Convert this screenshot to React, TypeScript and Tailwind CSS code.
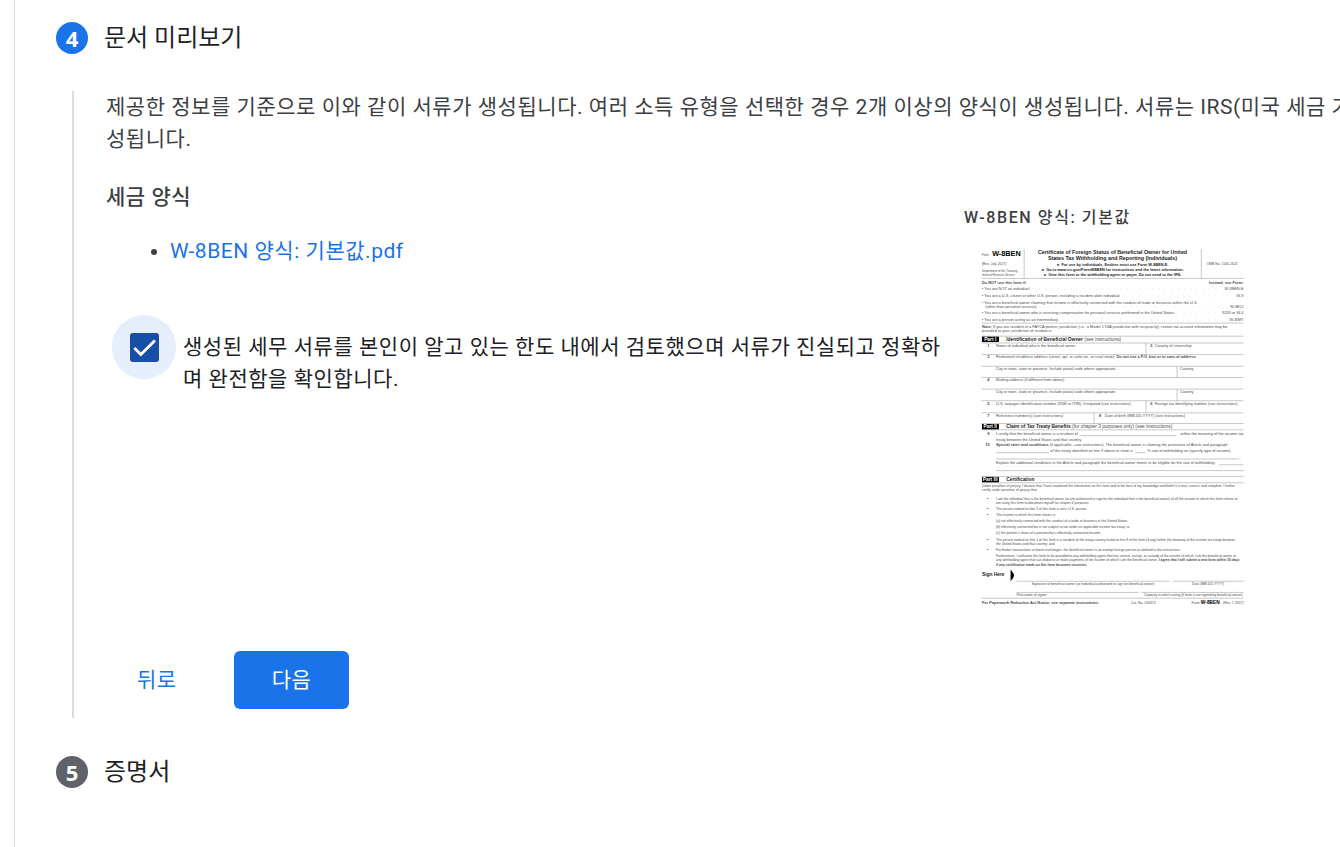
import React, { useState } from "react";

interface StepHeaderProps {
  number: number;
  title: string;
  active?: boolean;
}

const StepHeader: React.FC<StepHeaderProps> = ({ number, title, active = false }) => (
  <div className="flex items-center gap-4 tracking-normal">
    <span
      className={`flex size-8 shrink-0 items-center justify-center rounded-full font-['Noto_Sans',sans-serif] text-[22px] font-bold text-white ${
        active ? "bg-[#1a73e8]" : "bg-[#5f6368]"
      }`}
    >
      {number}
    </span>
    <h2 className="text-2xl leading-8 text-[#202124]">{title}</h2>
  </div>
);

// Full-width rules of the form, in PDF points
const RULES = [79, 171, 198, 212, 236, 260, 283, 307, 331, 356, 378, 391, 487, 500, 738];

// [x1, x2, y]
const FILL_LINES = [
  [238, 438, 403],
  [66, 176, 438],
  [353, 374, 438],
  [66, 567, 451],
  [525, 576, 463],
  [66, 576, 475],
  [108, 424, 703],
  [431, 576, 703],
  [108, 360, 726],
  [366, 576, 726],
];

// [x, y1, y2]
const DIVIDERS = [
  [124, 19, 79],
  [489, 19, 79],
  [375, 212, 236],
  [439, 260, 283],
  [439, 307, 331],
  [375, 331, 356],
  [268, 356, 378],
];

// [x1, y, x2]
const LEADERS = [
  [142, 101, 525],
  [335, 115, 545],
  [160, 137, 535],
  [440, 151, 520],
  [205, 165, 530],
];

const PARTS = [
  { y: 199, label: "Part I", title: "Identification of Beneficial Owner", note: "(see instructions)" },
  {
    y: 379,
    label: "Part II",
    title: "Claim of Tax Treaty Benefits",
    note: "(for chapter 3 purposes only) (see instructions)",
  },
  { y: 488, label: "Part III", title: "Certification", note: "" },
];

const FORM_TEXT: { x: number; y: number; text: string }[] = [
  { x: 37, y: 103, text: "• You are NOT an individual" },
  { x: 37, y: 117, text: "• You are a U.S. citizen or other U.S. person, including a resident alien individual" },
  {
    x: 37,
    y: 131,
    text: "• You are a beneficial owner claiming that income is effectively connected with the conduct of trade or business within the U.S.",
  },
  { x: 44, y: 139, text: "(other than personal services)" },
  {
    x: 37,
    y: 153,
    text: "• You are a beneficial owner who is receiving compensation for personal services performed in the United States",
  },
  { x: 37, y: 167, text: "• You are a person acting as an intermediary" },
  { x: 37, y: 190, text: "provided to your jurisdiction of residence." },
  { x: 66, y: 220, text: "Name of individual who is the beneficial owner" },
  { x: 393, y: 220, text: "Country of citizenship" },
  { x: 66, y: 268, text: "City or town, state or province. Include postal code where appropriate." },
  { x: 445, y: 268, text: "Country" },
  { x: 66, y: 291, text: "Mailing address (if different from above)" },
  { x: 66, y: 315, text: "City or town, state or province. Include postal code where appropriate." },
  { x: 445, y: 315, text: "Country" },
  { x: 66, y: 339, text: "U.S. taxpayer identification number (SSN or ITIN), if required (see instructions)" },
  { x: 393, y: 339, text: "Foreign tax identifying number (see instructions)" },
  { x: 66, y: 365, text: "Reference number(s) (see instructions)" },
  { x: 290, y: 365, text: "Date of birth (MM-DD-YYYY) (see instructions)" },
  { x: 66, y: 401, text: "I certify that the beneficial owner is a resident of" },
  { x: 66, y: 413, text: "treaty between the United States and that country." },
  { x: 178, y: 436, text: "of the treaty identified on line 9 above to claim a" },
  { x: 377, y: 436, text: "% rate of withholding on (specify type of income):" },
  { x: 569, y: 451, text: "." },
  {
    x: 66,
    y: 461,
    text: "Explain the additional conditions in the Article and paragraph the beneficial owner meets to be eligible for the rate of withholding:",
  },
];

const NUMBERS: [number, number, string][] = [
  [48, 220, "1"],
  [384, 220, "2"],
  [48, 243, "3"],
  [48, 291, "4"],
  [48, 339, "5"],
  [384, 339, "6"],
  [48, 365, "7"],
  [278, 365, "8"],
  [48, 401, "9"],
  [44, 424, "10"],
];

const RIGHT_COLUMN: [number, string][] = [
  [103, "W-8BEN-E"],
  [117, "W-9"],
  [139, "W-8ECI"],
  [153, "8233 or W-4"],
  [167, "W-8IMY"],
  [401, "within the meaning of the income tax"],
];

const CERTIFICATION: { x: number; y: number; text: string }[] = [
  {
    x: 37,
    y: 508,
    text: "Under penalties of perjury, I declare that I have examined the information on this form and to the best of my knowledge and belief it is true, correct, and complete. I further",
  },
  { x: 37, y: 517, text: "certify under penalties of perjury that:" },
  {
    x: 66,
    y: 536,
    text: "I am the individual that is the beneficial owner (or am authorized to sign for the individual that is the beneficial owner) of all the income to which this form relates or",
  },
  { x: 66, y: 544, text: "am using this form to document myself for chapter 4 purposes;" },
  { x: 66, y: 557, text: "The person named on line 1 of this form is not a U.S. person;" },
  { x: 66, y: 569, text: "The income to which this form relates is:" },
  { x: 66, y: 581, text: "(a) not effectively connected with the conduct of a trade or business in the United States," },
  { x: 66, y: 593, text: "(b) effectively connected but is not subject to tax under an applicable income tax treaty, or" },
  { x: 66, y: 605, text: "(c) the partner’s share of a partnership’s effectively connected income;" },
  {
    x: 66,
    y: 620,
    text: "The person named on line 1 of this form is a resident of the treaty country listed on line 9 of the form (if any) within the meaning of the income tax treaty between",
  },
  { x: 66, y: 628, text: "the United States and that country; and" },
  {
    x: 66,
    y: 641,
    text: "For broker transactions or barter exchanges, the beneficial owner is an exempt foreign person as defined in the instructions.",
  },
  {
    x: 66,
    y: 654,
    text: "Furthermore, I authorize this form to be provided to any withholding agent that has control, receipt, or custody of the income of which I am the beneficial owner or",
  },
];

const FormPreview: React.FC = () => (
  <svg
    viewBox="0 0 612 762"
    role="img"
    aria-label="W-8BEN"
    className="mt-[10px] h-[370px] w-[297px] font-['Liberation_Sans',sans-serif] tracking-normal"
    fill="#4a4a4a"
    fontSize="8"
  >
    <g stroke="#8a8a8a" strokeWidth="1">
      {RULES.map((y) => (
        <line key={y} x1="36" x2="576" y1={y} y2={y} />
      ))}
      {FILL_LINES.map(([x1, x2, y]) => (
        <line key={`${x1}-${y}`} x1={x1} x2={x2} y1={y} y2={y} />
      ))}
      {DIVIDERS.map(([x, y1, y2]) => (
        <line key={`${x}-${y1}`} x1={x} x2={x} y1={y1} y2={y2} />
      ))}
      {LEADERS.map(([x1, y, x2]) => (
        <line key={y} x1={x1} x2={x2} y1={y} y2={y} strokeDasharray="1 12" />
      ))}
    </g>

    <text x="37" y="32" fontSize="6">Form</text>
    <text x="58" y="32" fontSize="15" fontWeight="bold" fill="#000">W-8BEN</text>
    <text x="37" y="51" fontSize="7">(Rev. July 2017)</text>
    <text x="37" y="66" fontSize="6">Department of the Treasury</text>
    <text x="37" y="74" fontSize="6">Internal Revenue Service</text>
    <g textAnchor="middle" fontWeight="bold" fill="#222">
      <text x="306" y="29" fontSize="11">Certificate of Foreign Status of Beneficial Owner for United</text>
      <text x="306" y="41" fontSize="11">States Tax Withholding and Reporting (Individuals)</text>
      <text x="306" y="53">► For use by individuals. Entities must use Form W-8BEN-E.</text>
      <text x="306" y="63">► Go to www.irs.gov/FormW8BEN for instructions and the latest information.</text>
      <text x="306" y="74">► Give this form to the withholding agent or payer. Do not send to the IRS.</text>
    </g>
    <text x="532" y="51" fontSize="7" textAnchor="middle">OMB No. 1545-1621</text>
    <text x="37" y="90" fontWeight="bold">Do NOT use this form if:</text>
    <text x="576" y="90" fontWeight="bold" textAnchor="end">Instead, use Form:</text>
    <text x="37" y="182">
      <tspan fontWeight="bold">Note:</tspan> If you are resident in a FATCA partner jurisdiction (i.e., a Model 1 IGA
      jurisdiction with reciprocity), certain tax account information may be
    </text>

    {FORM_TEXT.map(({ x, y, text }) => (
      <text key={`${x}-${y}`} x={x} y={y}>{text}</text>
    ))}
    {NUMBERS.map(([x, y, text]) => (
      <text key={text} x={x} y={y} fontWeight="bold">{text}</text>
    ))}
    {RIGHT_COLUMN.map(([y, text]) => (
      <text key={text} x="576" y={y} textAnchor="end">{text}</text>
    ))}

    {PARTS.map(({ y, label, title, note }) => (
      <g key={label} fontSize="10">
        <rect x="37" y={y} width="35" height="11" fill="#000" />
        <text x="54" y={y + 9} fill="#fff" fontWeight="bold" textAnchor="middle">{label}</text>
        <text x="87" y={y + 9}>
          <tspan fontWeight="bold" fill="#222">{title}</tspan> {note}
        </text>
      </g>
    ))}

    <text x="66" y="243">
      Permanent residence address (street, apt. or suite no., or rural route).{" "}
      <tspan fontWeight="bold">Do not use a P.O. box or in-care-of address.</tspan>
    </text>
    <text x="66" y="424">
      <tspan fontWeight="bold">Special rates and conditions</tspan> (if applicable—see instructions): The
      beneficial owner is claiming the provisions of Article and paragraph
    </text>

    <g fontSize="7">
      {CERTIFICATION.map(({ x, y, text }) => (
        <text key={y} x={x} y={y}>{text}</text>
      ))}
      {[536, 557, 569, 620, 641].map((y) => (
        <text key={y} x="47" y={y} fontSize="9" fill="#000">•</text>
      ))}
      <text x="66" y="662">
        any withholding agent that can disburse or make payments of the income of which I am the beneficial owner.{" "}
        <tspan fontWeight="bold">I agree that I will submit a new form within 30 days</tspan>
      </text>
      <text x="66" y="671" fontWeight="bold">if any certification made on this form becomes incorrect.</text>
      <text x="266" y="711" textAnchor="middle">
        Signature of beneficial owner (or individual authorized to sign for beneficial owner)
      </text>
      <text x="503" y="711" textAnchor="middle">Date (MM-DD-YYYY)</text>
      <text x="108" y="734">Print name of signer</text>
      <text x="574" y="734" textAnchor="end">
        Capacity in which acting (if form is not signed by beneficial owner)
      </text>
      <text x="344" y="749">Cat. No. 25047Z</text>
      <text x="469" y="749">Form</text>
      <text x="576" y="749" textAnchor="end">(Rev. 7-2017)</text>
    </g>
    <text x="37" y="692" fontSize="10" fontWeight="bold" fill="#222">Sign Here</text>
    <path d="M96 679 C99 683 103 687 103 691 C103 695 99 699 96 703 Z" fill="#000" />
    <text x="37" y="749" fontWeight="bold">For Paperwork Reduction Act Notice, see separate instructions.</text>
    <text x="488" y="749" fontSize="10" fontWeight="bold" fill="#000">W-8BEN</text>
  </svg>
);

const App: React.FC = () => {
  const [confirmed, setConfirmed] = useState(true);

  return (
    <div className="flex min-h-screen overflow-hidden bg-white pl-[14px] font-[Roboto,'Noto_Sans_CJK_KR',sans-serif] text-[21px] leading-8 tracking-wide text-[#3c4043]">
      <main className="min-w-0 flex-1 border-l border-[#dadce0] pt-[22px] pl-[41px]">
        <StepHeader number={4} title="문서 미리보기" active />

        <section className="mt-[37px] ml-4 border-l-2 border-[#dadce0] pb-[9px] pl-8">
          <p className="whitespace-nowrap">
            제공한 정보를 기준으로 이와 같이 서류가 생성됩니다. 여러 소득 유형을 선택한 경우 2개 이상의 양식이
            생성됩니다. 서류는 IRS(미국 세금 기
            <br />
            성됩니다.
          </p>

          <div className="flex gap-4">
            <div className="min-w-0 flex-1 pt-[26px]">
              <h3 className="font-medium">세금 양식</h3>
              <ul className="mt-[22px] list-disc pl-16">
                <li>
                  <a href="#w-8ben" className="text-[#1a73e8]">
                    W-8BEN 양식: 기본값.pdf
                  </a>
                </li>
              </ul>

              <div className="mt-12 flex items-start gap-[7px] pl-[6px]">
                <span className="relative flex size-16 shrink-0 items-center justify-center rounded-full bg-[#e6edfb]">
                  <input
                    id="confirm"
                    type="checkbox"
                    checked={confirmed}
                    onChange={(e) => setConfirmed(e.target.checked)}
                    className="size-[29px] appearance-none rounded-[3px] border-2 border-[#174ea6] checked:bg-[#174ea6]"
                  />
                  {confirmed && (
                    <svg viewBox="0 0 24 24" className="pointer-events-none absolute size-[29px]" fill="none">
                      <path d="M3.6 12.4 L9 17.8 L20.6 6.2" stroke="#fff" strokeWidth="2.4" />
                    </svg>
                  )}
                </span>
                <label htmlFor="confirm" className="pt-4 break-all text-[#202124]">
                  생성된 세무 서류를 본인이 알고 있는 한도 내에서 검토했으며 서류가 진실되고 정확하며 완전함을
                  확인합니다.
                </label>
              </div>
            </div>

            <aside className="w-[376px] shrink-0 pt-[51px]">
              <h4 className="text-base leading-6 font-medium tracking-widest">W-8BEN 양식: 기본값</h4>
              <FormPreview />
            </aside>
          </div>

          <div className="mt-[41px] flex gap-[26px]">
            <button type="button" className="h-[58px] rounded-md px-[31px] tracking-wide text-[#1a73e8]">
              뒤로
            </button>
            <button type="button" className="h-[58px] rounded-md bg-[#1a73e8] px-[38px] tracking-wide text-white">
              다음
            </button>
          </div>
        </section>

        <div className="mt-[38px]">
          <StepHeader number={5} title="증명서" />
        </div>
      </main>
    </div>
  );
};

export default App;
